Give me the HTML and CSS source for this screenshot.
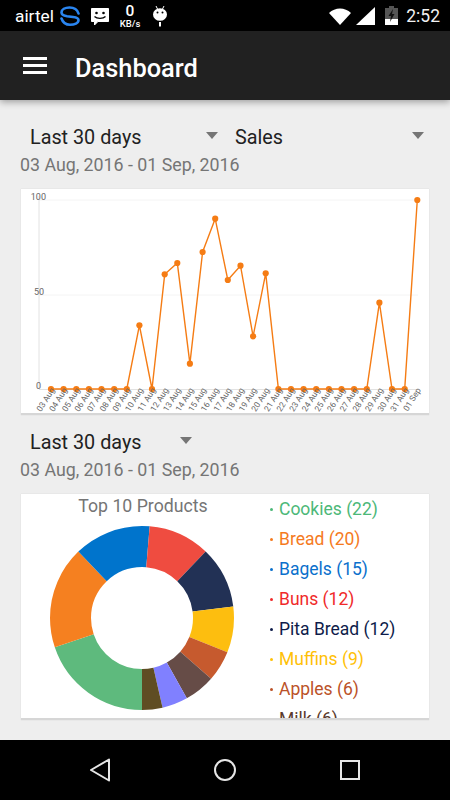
FILE: index.html
```html
<!DOCTYPE html>
<html lang="en">
  <head>
    <meta charset="UTF-8" />
    <meta name="viewport" content="width=device-width, initial-scale=1.0" />
    <title>Dashboard</title>
    <link rel="stylesheet" href="styles.css">
  </head>
  <body>
    <div class="status-bar">
      <div class="status-left">
        <span class="carrier">airtel</span>
        <svg class="icon-s" width="20" height="20" viewBox="0 0 20 20">
          <path d="M18.5 7.5 C17 2.5 12 1.5 9.5 1.5 C5 1.5 1.5 3.5 1.5 6.5 C1.5 9 4 9.7 7 10.2 L13 11 C16.5 11.5 18.5 12 18.5 14 C18.5 17 14.5 18.7 10 18.7 C6 18.7 2.8 16.5 1.5 12.5" fill="none" stroke="#2a85f0" stroke-width="2.6" stroke-linecap="round"/>
        </svg>
        <svg class="icon-msg" width="20" height="20" viewBox="0 0 20 20">
          <path d="M1.5 1.5 H18.5 V14.5 H8 L4.5 18 V14.5 H1.5 Z" fill="#fff" stroke="#fff" stroke-linejoin="round"/>
          <circle cx="6.5" cy="6" r="1.3" fill="#000"/>
          <circle cx="13.5" cy="6" r="1.3" fill="#000"/>
          <path d="M4.5 9.5 C7 12 13 12 15.5 9.5" fill="none" stroke="#000" stroke-width="1.4"/>
        </svg>
        <div class="speed">
          <span class="speed-num">0</span>
          <span class="speed-unit">KB/s</span>
        </div>
        <svg class="icon-bug" width="14" height="22" viewBox="0 0 14 22">
          <path d="M3 1 L4.5 4 M11 1 L9.5 4" stroke="#fff" stroke-width="1"/>
          <ellipse cx="7" cy="9.5" rx="7" ry="6.3" fill="#fff"/>
          <circle cx="4.5" cy="7.5" r="1" fill="#000"/>
          <circle cx="9.5" cy="7.5" r="1" fill="#000"/>
          <rect x="6" y="17" width="2" height="4.5" fill="#fff"/>
        </svg>
      </div>
      <div class="status-right">
        <svg class="icon-wifi" width="22" height="18" viewBox="0 0 22 18">
          <path d="M0 6 C6 0 16 0 22 6 L11 18 Z" fill="#fff"/>
        </svg>
        <svg class="icon-signal" width="19" height="18" viewBox="0 0 19 18">
          <path d="M19 0 V18 H0 Z" fill="#fff"/>
        </svg>
        <svg class="icon-battery" width="13" height="19" viewBox="0 0 13 19">
          <path d="M4 0 H9 V2 H13 V19 H0 V2 H4 Z" fill="#555"/>
          <path d="M0 13 H13 V19 H0 Z" fill="#fff"/>
          <path d="M8 3 L3.5 10 H6 L5 16 L9.5 8 H7 Z" fill="#111"/>
        </svg>
        <span class="clock">2:52</span>
      </div>
    </div>

    <header class="app-bar">
      <div class="menu-icon"><span></span><span></span><span></span></div>
      <h1>Dashboard</h1>
    </header>

    <main class="content">
      <div class="filters">
        <div class="spinner"><span>Last 30 days</span><i class="caret"></i></div>
        <div class="spinner"><span>Sales</span><i class="caret"></i></div>
      </div>
      <div class="date-range">03 Aug, 2016 - 01 Sep, 2016</div>

      <div class="card line-card">
        <svg class="line-chart" width="408" height="224" viewBox="21 189 408 224">
          <g class="grid">
            <line x1="39" y1="200" x2="418" y2="200"/>
            <line x1="39" y1="295" x2="418" y2="295"/>
          </g>
          <line class="axis" x1="39" y1="196" x2="39" y2="389"/>
          <line class="axis" x1="39" y1="389.5" x2="418" y2="389.5"/>
          <g class="y-labels">
            <text x="46" y="199.5">100</text>
            <text x="44" y="294.5">50</text>
            <text x="41" y="389">0</text>
          </g>
          <polyline class="series" points="51,389 63.6,389 76.3,389 88.9,389 101.5,389 114.2,389 126.8,389 139.4,325.3 152,389 164.7,274.3 177.3,263 189.9,363.7 202.6,252 215.2,218.7 227.8,280 240.5,265.7 253.1,336.3 265.7,273.3 278.4,389 291,389 303.6,389 316.2,389 328.9,389 341.5,389 354.1,389 366.8,389 379.4,302.7 392,389 404.7,389 417.3,200"/>
          <g class="points">
            <circle cx="51" cy="389"/><circle cx="63.6" cy="389"/><circle cx="76.3" cy="389"/><circle cx="88.9" cy="389"/><circle cx="101.5" cy="389"/>
            <circle cx="114.2" cy="389"/><circle cx="126.8" cy="389"/><circle cx="139.4" cy="325.3"/><circle cx="152" cy="389"/><circle cx="164.7" cy="274.3"/>
            <circle cx="177.3" cy="263"/><circle cx="189.9" cy="363.7"/><circle cx="202.6" cy="252"/><circle cx="215.2" cy="218.7"/><circle cx="227.8" cy="280"/>
            <circle cx="240.5" cy="265.7"/><circle cx="253.1" cy="336.3"/><circle cx="265.7" cy="273.3"/><circle cx="278.4" cy="389"/><circle cx="291" cy="389"/>
            <circle cx="303.6" cy="389"/><circle cx="316.2" cy="389"/><circle cx="328.9" cy="389"/><circle cx="341.5" cy="389"/><circle cx="354.1" cy="389"/>
            <circle cx="366.8" cy="389"/><circle cx="379.4" cy="302.7"/><circle cx="392" cy="389"/><circle cx="404.7" cy="389"/><circle cx="417.3" cy="200"/>
          </g>
          <g class="x-labels">
            <text transform="translate(55 390) rotate(-58)">03 Aug</text>
            <text transform="translate(67.6 390) rotate(-58)">04 Aug</text>
            <text transform="translate(80.3 390) rotate(-58)">05 Aug</text>
            <text transform="translate(92.9 390) rotate(-58)">06 Aug</text>
            <text transform="translate(105.5 390) rotate(-58)">07 Aug</text>
            <text transform="translate(118.2 390) rotate(-58)">08 Aug</text>
            <text transform="translate(130.8 390) rotate(-58)">09 Aug</text>
            <text transform="translate(143.4 390) rotate(-58)">10 Aug</text>
            <text transform="translate(156 390) rotate(-58)">11 Aug</text>
            <text transform="translate(168.7 390) rotate(-58)">12 Aug</text>
            <text transform="translate(181.3 390) rotate(-58)">13 Aug</text>
            <text transform="translate(193.9 390) rotate(-58)">14 Aug</text>
            <text transform="translate(206.6 390) rotate(-58)">15 Aug</text>
            <text transform="translate(219.2 390) rotate(-58)">16 Aug</text>
            <text transform="translate(231.8 390) rotate(-58)">17 Aug</text>
            <text transform="translate(244.5 390) rotate(-58)">18 Aug</text>
            <text transform="translate(257.1 390) rotate(-58)">19 Aug</text>
            <text transform="translate(269.7 390) rotate(-58)">20 Aug</text>
            <text transform="translate(282.4 390) rotate(-58)">21 Aug</text>
            <text transform="translate(295 390) rotate(-58)">22 Aug</text>
            <text transform="translate(307.6 390) rotate(-58)">23 Aug</text>
            <text transform="translate(320.2 390) rotate(-58)">24 Aug</text>
            <text transform="translate(332.9 390) rotate(-58)">25 Aug</text>
            <text transform="translate(345.5 390) rotate(-58)">26 Aug</text>
            <text transform="translate(358.1 390) rotate(-58)">27 Aug</text>
            <text transform="translate(370.8 390) rotate(-58)">28 Aug</text>
            <text transform="translate(383.4 390) rotate(-58)">29 Aug</text>
            <text transform="translate(396 390) rotate(-58)">30 Aug</text>
            <text transform="translate(408.7 390) rotate(-58)">31 Aug</text>
            <text transform="translate(421.3 390) rotate(-58)">01 Sep</text>
          </g>
        </svg>
      </div>

      <div class="filters">
        <div class="spinner spinner-short"><span>Last 30 days</span><i class="caret"></i></div>
      </div>
      <div class="date-range">03 Aug, 2016 - 01 Sep, 2016</div>

      <div class="card pie-card">
        <div class="pie-col">
          <div class="pie-title">Top 10 Products</div>
          <svg class="donut" width="184" height="184" viewBox="0 0 184 184">
            <g fill="none" stroke-width="41" transform="rotate(90 92 92)">
              <circle cx="92" cy="92" r="71.5" pathLength="111" stroke="#5eba7d" stroke-dasharray="22 89" stroke-dashoffset="0"/>
              <circle cx="92" cy="92" r="71.5" pathLength="111" stroke="#f58020" stroke-dasharray="20 91" stroke-dashoffset="-22"/>
              <circle cx="92" cy="92" r="71.5" pathLength="111" stroke="#0074cc" stroke-dasharray="15 96" stroke-dashoffset="-42"/>
              <circle cx="92" cy="92" r="71.5" pathLength="111" stroke="#ef4c40" stroke-dasharray="12 99" stroke-dashoffset="-57"/>
              <circle cx="92" cy="92" r="71.5" pathLength="111" stroke="#223155" stroke-dasharray="12 99" stroke-dashoffset="-69"/>
              <circle cx="92" cy="92" r="71.5" pathLength="111" stroke="#fdbe0f" stroke-dasharray="9 102" stroke-dashoffset="-81"/>
              <circle cx="92" cy="92" r="71.5" pathLength="111" stroke="#c65a2e" stroke-dasharray="6 105" stroke-dashoffset="-90"/>
              <circle cx="92" cy="92" r="71.5" pathLength="111" stroke="#664c47" stroke-dasharray="6 105" stroke-dashoffset="-96"/>
              <circle cx="92" cy="92" r="71.5" pathLength="111" stroke="#8080ff" stroke-dasharray="5 106" stroke-dashoffset="-102"/>
              <circle cx="92" cy="92" r="71.5" pathLength="111" stroke="#5f4d23" stroke-dasharray="4 107" stroke-dashoffset="-107"/>
            </g>
          </svg>
        </div>
        <ul class="legend">
          <li class="c-cookies">Cookies (22)</li>
          <li class="c-bread">Bread (20)</li>
          <li class="c-bagels">Bagels (15)</li>
          <li class="c-buns">Buns (12)</li>
          <li class="c-pita">Pita Bread (12)</li>
          <li class="c-muffins">Muffins (9)</li>
          <li class="c-apples">Apples (6)</li>
          <li class="c-milk">Milk (6)</li>
        </ul>
      </div>
    </main>

    <nav class="nav-bar">
      <svg width="22" height="26" viewBox="0 0 22 26">
        <path d="M20 2.5 L2 13 L20 23.5 Z" fill="none" stroke="#e6e6e6" stroke-width="2" stroke-linejoin="round"/>
      </svg>
      <svg width="24" height="24" viewBox="0 0 24 24">
        <circle cx="12" cy="12" r="10" fill="none" stroke="#e6e6e6" stroke-width="2"/>
      </svg>
      <svg width="22" height="22" viewBox="0 0 22 22">
        <rect x="2" y="2" width="18" height="18" fill="none" stroke="#e6e6e6" stroke-width="2"/>
      </svg>
    </nav>
  </body>
</html>
```

FILE: styles.css
```css
:root {
  --bar-black: #000000;
  --app-bar: #212121;
  --page-bg: #eeeeee;
  --text-grey: #757575;
  --chart-orange: #f57c14;
}

* {
  box-sizing: border-box;
}

body {
  font-family: Roboto, "Liberation Sans", sans-serif;
  background-color: var(--page-bg);
  margin: 0;
  width: 450px;
  height: 800px;
  display: flex;
  flex-direction: column;
  overflow: hidden;
}

.status-bar {
  height: 31px;
  flex: none;
  background-color: var(--bar-black);
  color: #fff;
  display: flex;
  justify-content: space-between;
  align-items: center;
  padding: 0 10px 0 15px;
}

.status-left,
.status-right {
  display: flex;
  align-items: center;
}

.carrier {
  font-size: 17.3px;
  width: 45px;
}

.icon-msg {
  margin: 2px 0 0 10px;
}

.speed {
  display: flex;
  flex-direction: column;
  align-items: center;
  width: 22px;
  margin: 2px 0 0 9px;
}

.speed-num {
  font-size: 15.5px;
  font-weight: 500;
  line-height: 15px;
}

.speed-unit {
  font-size: 9.5px;
  font-weight: 500;
  line-height: 10px;
}

.icon-bug {
  margin-left: 12px;
}

.icon-signal {
  margin-left: 5px;
}

.icon-battery {
  margin-left: 10px;
}

.clock {
  font-size: 17.5px;
  margin-left: 8px;
  color: #f2f2f2;
}

.app-bar {
  height: 69px;
  flex: none;
  background-color: var(--app-bar);
  color: #fff;
  display: flex;
  align-items: center;
  padding-left: 23px;
  box-shadow: 0 2px 7px rgba(0, 0, 0, 0.35);
  position: relative;
}

.menu-icon {
  width: 24px;
  display: flex;
  flex-direction: column;
  gap: 4px;
}

.menu-icon span {
  display: block;
  height: 3px;
  background-color: #fff;
}

.app-bar h1 {
  font-size: 25.4px;
  font-weight: 500;
  margin: 4px 0 0 28px;
}

.content {
  flex: 1;
  min-height: 0;
  overflow: hidden;
  padding: 24px 19px 0 20px;
}

.filters {
  display: flex;
  height: 26px;
}

.spinner {
  width: 205px;
  display: flex;
  justify-content: space-between;
  align-items: center;
  padding: 0 7px 0 10px;
  font-size: 19.8px;
  color: #212121;
}

.spinner + .spinner {
  width: 206px;
}

.spinner-short {
  width: 179px;
}

.caret {
  width: 0;
  height: 0;
  margin-bottom: 4px;
  border-left: 6px solid transparent;
  border-right: 6px solid transparent;
  border-top: 7px solid var(--text-grey);
}

.date-range {
  font-size: 17.8px;
  line-height: 26px;
  height: 26px;
  color: var(--text-grey);
  margin-top: 2px;
}

.card {
  width: 408px;
  height: 226px;
  margin-left: 1px;
  background-color: #fff;
  border-bottom: 2px solid #d6d6d6;
  box-shadow: 0 0 1px rgba(0, 0, 0, 0.15);
  overflow: hidden;
}

.line-card {
  margin-top: 11px;
  margin-bottom: 14px;
}

.pie-card {
  margin-top: 11px;
  display: flex;
}

.line-chart {
  display: block;
}

.grid line {
  stroke: #f4f4f4;
  stroke-width: 1;
}

.axis {
  stroke: #e2e2e2;
  stroke-width: 1;
}

.y-labels text {
  font-size: 9px;
  fill: #666;
  text-anchor: end;
}

.x-labels text {
  font-size: 8.4px;
  fill: #666;
  text-anchor: end;
}

.series {
  fill: none;
  stroke: var(--chart-orange);
  stroke-width: 1.4;
}

.points circle {
  r: 3.1px;
  fill: var(--chart-orange);
}

.pie-col {
  width: 244px;
  display: flex;
  flex-direction: column;
  flex: none;
  padding-left: 29px;
}

.pie-title {
  font-size: 17.7px;
  color: var(--text-grey);
  text-align: center;
  width: 186px;
  height: 32px;
  line-height: 24px;
}

.donut {
  display: block;
}

.legend {
  list-style: none;
  margin: 0;
  padding: 0 0 0 5px;
  font-size: 17.5px;
}

.legend li {
  height: 30px;
  line-height: 30px;
  white-space: nowrap;
  display: flex;
  align-items: center;
}

.legend li::before {
  content: "";
  width: 3px;
  height: 3px;
  border-radius: 50%;
  background-color: currentColor;
  margin-right: 6px;
}

.c-cookies { color: #4cb878; }
.c-bread { color: #f57a1e; }
.c-bagels { color: #0a70cc; }
.c-buns { color: #f02a2a; }
.c-pita { color: #0e1c4a; }
.c-muffins { color: #ffc107; }
.c-apples { color: #bb5228; }
.c-milk { color: #5a3a2c; }

.nav-bar {
  height: 60px;
  flex: none;
  background-color: var(--bar-black);
  display: flex;
  align-items: center;
  justify-content: space-between;
  padding: 0 89px;
}
```
